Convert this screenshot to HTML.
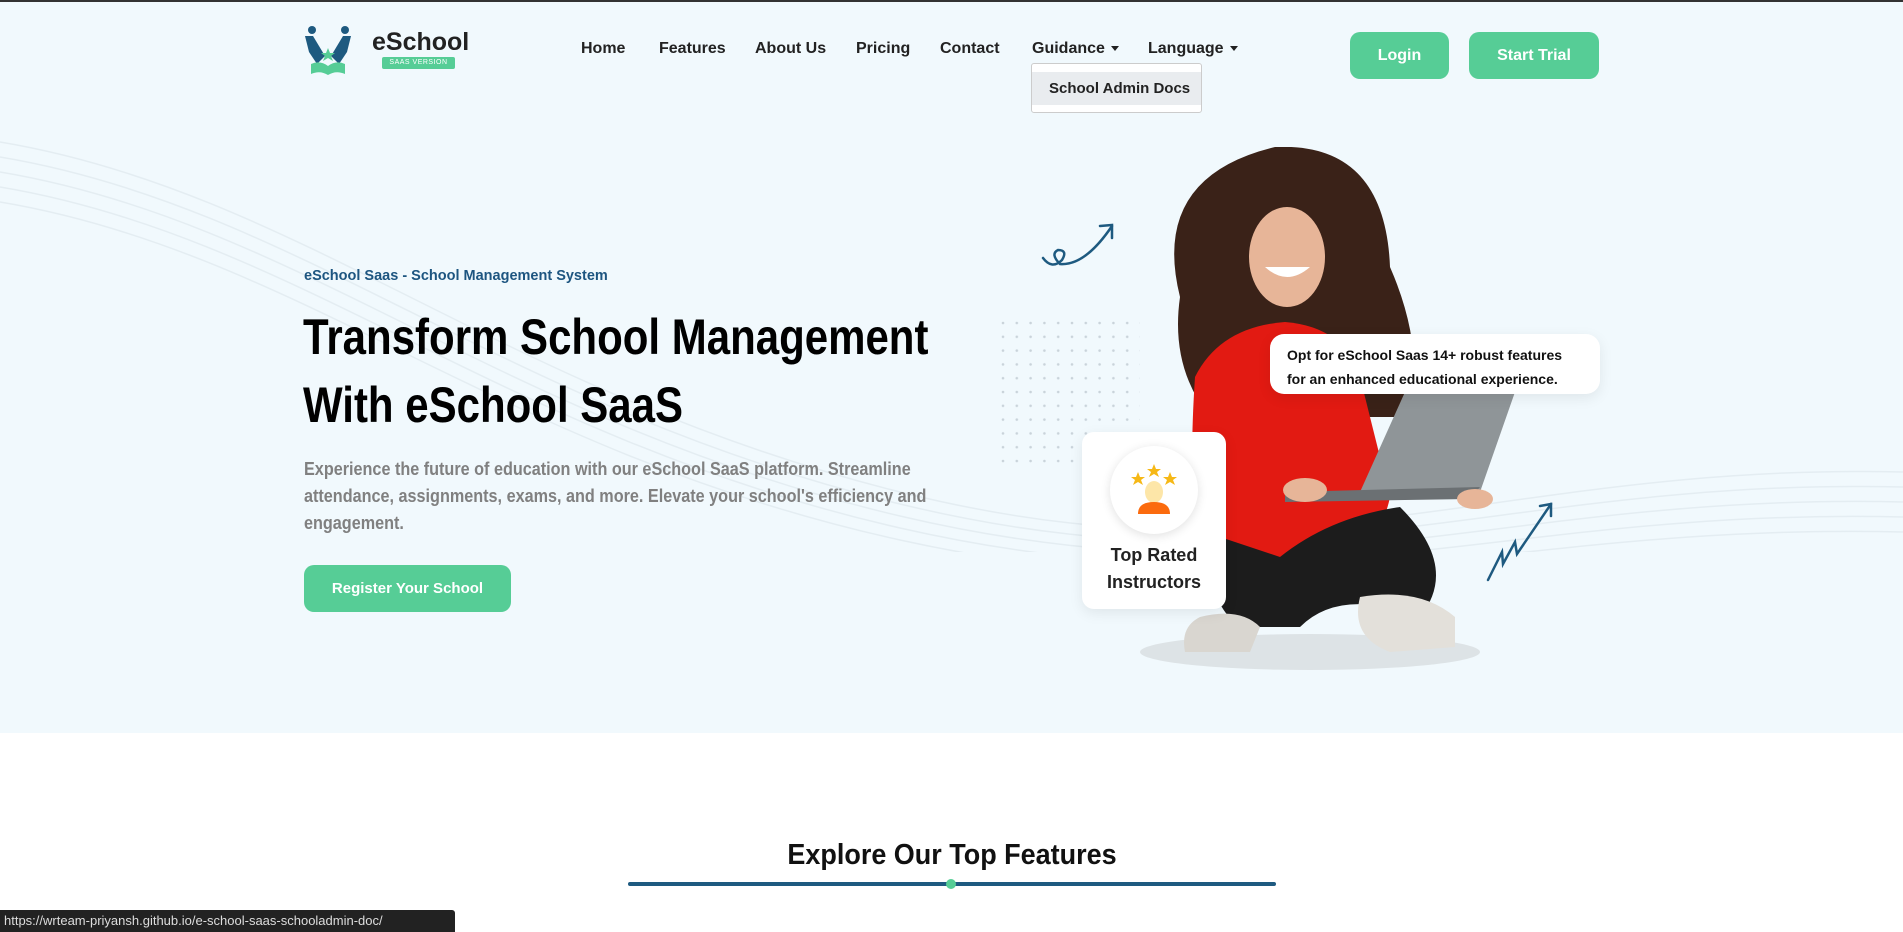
<!DOCTYPE html>
<html><head><meta charset="utf-8"><style>
*{margin:0;padding:0;box-sizing:border-box}
body{width:1903px;height:932px;overflow:hidden;background:#fff;font-family:"Liberation Sans",sans-serif;position:relative}
.hero{position:absolute;left:0;top:0;width:1903px;height:733px;background:#f1f9fd;border-top:2px solid #333;overflow:hidden}
.abs{position:absolute;white-space:nowrap}
.nav{font-size:16px;font-weight:bold;color:#222;top:38px}
.btn{position:absolute;background:#56cd96;color:#fff;font-weight:bold;font-size:16px;border-radius:10px;display:flex;align-items:center;justify-content:center}
.tri{display:inline-block;border-left:4px solid transparent;border-right:4px solid transparent;border-top:5px solid #222;margin-left:6px;vertical-align:middle}
.sx{display:inline-block;transform-origin:left center}
</style></head><body>
<div class="hero">
<svg class="abs" style="left:0;top:130px" width="1903" height="420" viewBox="0 0 1903 420" fill="none" stroke="#e4edf2" stroke-width="1.5">
<path d="M0 10 C300 60 500 260 900 360 S1500 330 1903 340"/>
<path d="M0 25 C300 75 500 275 900 372 S1500 345 1903 355"/>
<path d="M0 40 C300 90 500 290 900 384 S1500 360 1903 370"/>
<path d="M0 55 C300 105 500 305 900 396 S1500 375 1903 385"/>
<path d="M0 70 C300 120 500 320 900 408 S1500 390 1903 400"/>
</svg>
<svg class="abs" style="left:303px;top:20px" width="50" height="54" viewBox="0 0 50 54">
<circle cx="9" cy="8" r="4" fill="#1e5a80"/><circle cx="42" cy="8" r="4" fill="#1e5a80"/>
<path d="M2 14 L10 14 L22 34 L14 42 L6 30 Z" fill="#1e5a80"/><path d="M48 14 L40 14 L28 34 L36 42 L44 30 Z" fill="#1e5a80"/>
<path d="M25 26 l2 5 5 0 -4 3 2 5 -5 -3 -5 3 2 -5 -4 -3 5 0z" fill="#56cd96"/>
<path d="M8 42 Q17 38 25 44 Q33 38 42 42 L42 52 Q33 48 25 53 Q17 48 8 52 Z" fill="#56cd96"/>
</svg>
<div class="abs" style="left:372px;top:26px;font-size:25px;font-weight:bold;color:#222">eSchool</div>
<div class="abs" style="left:382px;top:55px;width:73px;height:12px;background:#56cd96;border-radius:2px;color:#fff;font-size:7px;text-align:center;line-height:12px;letter-spacing:.5px">SAAS VERSION</div>
<div class="abs nav" style="left:581px">Home</div>
<div class="abs nav" style="left:659px">Features</div>
<div class="abs nav" style="left:755px">About Us</div>
<div class="abs nav" style="left:856px">Pricing</div>
<div class="abs nav" style="left:940px">Contact</div>
<div class="abs nav" style="left:1032px">Guidance<span class="tri"></span></div>
<div class="abs nav" style="left:1148px">Language<span class="tri"></span></div>
<div class="abs" style="left:1031px;top:61px;width:171px;height:50px;background:#fff;border:1px solid #ccc;border-radius:3px">
<div style="margin-top:8px;height:33px;background:#e9ecef;font-size:15px;font-weight:bold;color:#222;line-height:33px;padding-left:17px">School Admin Docs</div></div>
<div class="btn" style="left:1350px;top:30px;width:99px;height:47px">Login</div>
<div class="btn" style="left:1469px;top:30px;width:130px;height:47px">Start Trial</div>
<div class="abs" style="left:304px;top:266px;font-size:14.5px;font-weight:bold;color:#1d5580">eSchool Saas - School Management System</div>
<div class="abs" style="left:303px;top:301px;font-size:50px;font-weight:bold;color:#000;line-height:68px"><span class="sx" style="transform:scaleX(.84)">Transform School Management</span><br><span class="sx" style="transform:scaleX(.84)">With eSchool SaaS</span></div>
<div class="abs" style="left:304px;top:454px;font-size:18px;color:#808080;line-height:27px;font-weight:bold"><span class="sx" style="transform:scaleX(.9)">Experience the future of education with our eSchool SaaS platform. Streamline</span><br><span class="sx" style="transform:scaleX(.9)">attendance, assignments, exams, and more. Elevate your school's efficiency and</span><br><span class="sx" style="transform:scaleX(.9)">engagement.</span></div>
<div class="btn" style="left:304px;top:563px;width:207px;height:47px;font-size:15px">Register Your School</div>
<svg class="abs" style="left:1000px;top:318px" width="140" height="150"><defs><pattern id="d" width="13.8" height="13.8" patternUnits="userSpaceOnUse"><circle cx="3" cy="3" r="1.3" fill="#c9d3da"/></pattern></defs><rect width="140" height="150" fill="url(#d)"/></svg>
<svg class="abs" style="left:1040px;top:218px" width="80" height="60" fill="none" stroke="#1e5a80" stroke-width="2.5" stroke-linecap="round"><path d="M3 38 Q12 50 22 40 Q28 30 18 30 Q10 34 20 44 Q45 46 72 6"/><path d="M60 6 L72 5 L72 18"/></svg>
<svg class="abs" style="left:1485px;top:498px" width="70" height="85" fill="none" stroke="#1e5a80" stroke-width="2.5" stroke-linecap="round"><path d="M3 80 L17 52 L18 64 L30 42 L32 54 L66 4"/><path d="M55 6 L66 4 L66 16"/></svg>
<svg class="abs" style="left:1100px;top:145px" width="420" height="530" viewBox="0 0 420 530">
<ellipse cx="210" cy="505" rx="170" ry="18" fill="#dde3e6"/>
<path d="M80 150 Q50 30 175 0 Q285 -5 290 120 Q325 200 310 270 L110 270 Q70 220 80 150Z" fill="#3a2218"/>
<path d="M95 230 Q120 180 185 175 Q245 180 260 230 L290 350 Q280 400 230 430 L110 440 Q85 380 95 230Z" fill="#e21a12"/>
<ellipse cx="187" cy="110" rx="38" ry="50" fill="#e7b598"/>
<path d="M165 120 Q187 140 210 120 Z" fill="#fff"/>
<path d="M120 390 Q100 450 140 480 L200 480 Q240 440 320 470 Q360 420 300 360 Q230 370 180 410 Z" fill="#1c1c1c"/>
<path d="M100 470 Q140 460 160 480 L150 505 L85 505 Q80 480 100 470Z" fill="#d9d6d0"/>
<path d="M260 450 Q320 440 355 470 L355 500 L290 505 Q250 490 260 450Z" fill="#e3e0da"/>
<path d="M305 245 L415 245 L380 345 L260 345 Z" fill="#8f9598"/>
<path d="M185 345 L380 340 L370 352 L185 355 Z" fill="#6b7073"/>
<ellipse cx="205" cy="343" rx="22" ry="12" fill="#e7b598"/>
<ellipse cx="375" cy="352" rx="18" ry="10" fill="#e7b598"/>
</svg>
<div class="abs" style="left:1270px;top:332px;width:330px;height:60px;background:#fff;border-radius:14px;box-shadow:0 4px 14px rgba(0,0,0,.08);padding:9px 0 0 17px;font-size:14px;font-weight:bold;color:#111;line-height:24px">Opt for eSchool Saas 14+ robust features<br>for an enhanced educational experience.</div>
<div class="abs" style="left:1082px;top:430px;width:144px;height:177px;background:#fff;border-radius:12px;box-shadow:0 4px 14px rgba(0,0,0,.08);text-align:center">
<div style="width:88px;height:88px;border-radius:50%;background:#fff;box-shadow:0 2px 10px rgba(0,0,0,.12);margin:14px auto 0;position:relative">
<svg width="88" height="88" viewBox="0 0 88 88"><g fill="#f6b816"><path d="M28 26 l2 5 5 0 -4 3 2 5 -5 -3 -5 3 2 -5 -4 -3 5 0z"/><path d="M44 18 l2 5 5 0 -4 3 2 5 -5 -3 -5 3 2 -5 -4 -3 5 0z"/><path d="M60 26 l2 5 5 0 -4 3 2 5 -5 -3 -5 3 2 -5 -4 -3 5 0z"/></g><ellipse cx="44" cy="46" rx="9" ry="11" fill="#fde6a8"/><path d="M28 68 Q28 56 44 56 Q60 56 60 68Z" fill="#fb6b0e"/></svg></div>
<div style="font-size:18px;font-weight:bold;color:#222;line-height:27px;margin-top:8px">Top Rated<br>Instructors</div></div>
</div>
<div class="abs" style="left:0;top:839px;width:1903px;text-align:center;font-size:29px;font-weight:bold;color:#111"><span class="sx" style="transform:scaleX(.93);transform-origin:center">Explore Our Top Features</span></div>
<div class="abs" style="left:628px;top:882px;width:648px;height:4px;background:#1e5a80;border-radius:2px"></div>
<div class="abs" style="left:946px;top:879px;width:10px;height:10px;background:#56cd96;border-radius:50%"></div>
<div class="abs" style="left:0;top:910px;width:455px;height:22px;background:#222;color:#ddd;font-size:13px;line-height:22px;padding-left:4px;border-radius:0 3px 0 0">https://wrteam-priyansh.github.io/e-school-saas-schooladmin-doc/</div>
</body></html>
